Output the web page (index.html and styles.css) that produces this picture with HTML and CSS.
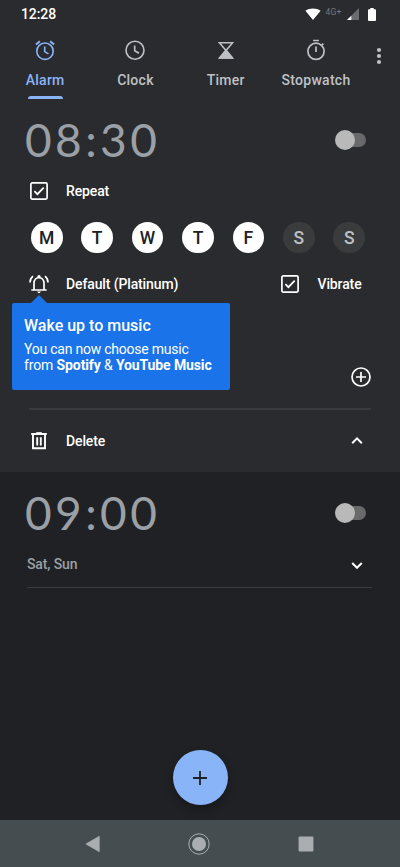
FILE: index.html
```html
<!DOCTYPE html>
<html lang="en">
<head>
<meta charset="utf-8">
<title>Clock</title>
<link rel="stylesheet" href="styles.css">
</head>
<body>
<div class="phone">
  <header class="status">
    <span class="status-time">12:28</span>
    <div class="status-icons">
      <svg width="16" height="12" viewBox="0 0 16 12"><path d="M8 12 .4 2.800C4.600-.4 11.400-.4 15.600 2.800z" fill="#fff"/></svg>
      <span class="net">4G+</span>
      <svg class="signal" width="12" height="12" viewBox="0 0 12 12"><path d="M12 0v12H0z" fill="#6b6c6e"/><path d="M4.300 7.700V12H0z" fill="#fff"/></svg>
      <svg class="battery" width="8" height="13" viewBox="0 0 8 13"><path d="M2.300 0h3.400v1.300H7q1 0 1 1V12q0 1-1 1H1q-1 0-1-1V2.300q0-1 1-1h1.300z" fill="#fff"/></svg>
    </div>
  </header>

  <nav class="tabs">
    <div class="tab active">
      <svg width="24" height="24" viewBox="0 0 24 24" fill="none" stroke="currentColor" stroke-width="1.600"><circle cx="12" cy="13.200" r="8.200"/><path d="M11.700 8.500v5.100l3.800 2.300"/><path d="m2.900 6.500 4-3.300m14.200 3.300-4-3.300" stroke-width="2"/></svg>
      <span class="tab-label alarm">Alarm</span>
    </div>
    <div class="tab">
      <svg width="24" height="24" viewBox="0 0 24 24" fill="none" stroke="currentColor" stroke-width="1.600"><circle cx="12" cy="12.300" r="9"/><path d="M11.700 7.400v5.300l4.300 2.600"/></svg>
      <span class="tab-label clock">Clock</span>
    </div>
    <div class="tab">
      <svg width="24" height="24" viewBox="0 0 24 24"><path d="M5.400 4.700h13.200L12 12.500zM5.400 20h13.200L12 12z" fill="none" stroke="currentColor" stroke-width="1.500"/><path d="M4.600 20.700h14.800L12 12z" fill="currentColor"/></svg>
      <span class="tab-label timer">Timer</span>
    </div>
    <div class="tab">
      <svg width="24" height="24" viewBox="0 0 24 24" fill="none" stroke="currentColor" stroke-width="1.700"><circle cx="12" cy="13.300" r="8.100"/><path d="M9.100 2.500h5.800M12 8.500v5.600M17.600 7.500l1.800-1.800"/></svg>
      <span class="tab-label stopwatch">Stopwatch</span>
    </div>
    <svg class="more" width="6" height="18" viewBox="0 0 6 18" fill="#bfc1c5"><circle cx="3" cy="3" r="2.100"/><circle cx="3" cy="9" r="2.100"/><circle cx="3" cy="15" r="2.100"/></svg>
  </nav>

  <main>
    <section class="card open">
      <div class="row time-row"><span class="time">08:30</span><span class="switch"></span></div>
      <div class="row repeat-row">
        <svg class="icon" width="20" height="20" viewBox="0 0 20 20" fill="none" stroke="#fff" stroke-width="1.700"><rect x="1.900" y="1.900" width="16.200" height="16.200" rx="1.300"/><path d="m5.400 10.200 3 3 6.300-6.600"/></svg>
        <span class="label">Repeat</span>
      </div>
      <div class="days">
        <span class="day on">M</span><span class="day on">T</span><span class="day on">W</span><span class="day on">T</span><span class="day on">F</span><span class="day">S</span><span class="day">S</span>
      </div>
      <div class="row sound-row">
        <svg class="icon" width="20" height="20" viewBox="0 0 20 20" fill="none" stroke="#fff" stroke-width="1.700"><path d="M2.300 16h15.400M5 16V9.300C5 1.700 15 1.700 15 9.300V16M1 8.600C1 5.800 2 3.800 4 2.200M19 8.600C19 5.800 18 3.800 16 2.200"/><path d="M8.500 3V1.700q1.500-1.500 3 0V3zM8.100 17.500h3.800q-1.900 3.400-3.800 0z" fill="#fff" stroke="none"/></svg>
        <span class="label default">Default (Platinum)</span>
        <svg class="vib-box" width="20" height="20" viewBox="0 0 20 20" fill="none" stroke="#fff" stroke-width="1.700"><rect x="1.900" y="1.900" width="16.200" height="16.200" rx="1.300"/><path d="m5.400 10.200 3 3 6.300-6.600"/></svg>
        <span class="label vibrate">Vibrate</span>
        <aside class="tip">
          <h2>Wake up to music</h2>
          <p class="line-one">You can now choose music</p>
          <p class="line-two">from <b>Spotify</b> &amp; <b>YouTube Music</b></p>
        </aside>
      </div>
      <div class="row add-row">
        <svg width="20" height="20" viewBox="0 0 20 20" fill="none" stroke="#fff" stroke-width="1.700"><circle cx="10" cy="10" r="9"/><path d="M10 5v10M5 10h10"/></svg>
      </div>
      <div class="rule"></div>
      <div class="row delete-row">
        <svg class="icon" width="20" height="20" viewBox="0 0 20 20" fill="none" stroke="#fff" stroke-width="1.900"><path d="M2.200 3h15.600M4 3v14.200h12V3M8.200 6.200v8.300M11.800 6.200v8.300"/><path d="M7.200 1.900h5.600" stroke-width="1.500"/></svg>
        <span class="label">Delete</span>
        <svg class="chev" width="12" height="8" viewBox="0 0 12 8" fill="none" stroke="#fff" stroke-width="2"><path d="m1.200 6.200 4.800-4.800 4.800 4.800"/></svg>
      </div>
    </section>

    <section class="card">
      <div class="row time-row second"><span class="time">09:00</span><span class="switch"></span></div>
      <div class="row summary-row">
        <span class="label muted">Sat, Sun</span>
        <svg class="chev" width="12" height="9" viewBox="0 0 12 9" fill="none" stroke="#fff" stroke-width="2"><path d="m1.200 3 4.800 4.800 4.800-4.800"/></svg>
      </div>
      <div class="rule thin"></div>
    </section>
  </main>

  <div class="fab-area">
    <div class="fab"><svg width="14" height="14" viewBox="0 0 14 14" stroke="#202124" stroke-width="1.800"><path d="M7 0v14M0 7h14"/></svg></div>
  </div>

  <footer class="navbar">
    <svg width="16" height="16" viewBox="0 0 16 16"><path d="M14.300.2V15.800L.8 8z" fill="#aaaeb1" stroke="#aaaeb1" stroke-width=".6" stroke-linejoin="round"/></svg>
    <svg width="22" height="22" viewBox="0 0 22 22"><circle cx="11" cy="11" r="10.200" fill="none" stroke="#aaaeb1" stroke-width="1"/><circle cx="11" cy="11" r="7" fill="#aaaeb1"/></svg>
    <svg width="16" height="16" viewBox="0 0 16 16"><rect x=".6" y=".6" width="14.800" height="14.800" rx="1" fill="#aaaeb1"/></svg>
  </footer>
</div>
</body>
</html>
```
FILE: styles.css
```css
* { box-sizing: border-box; }
body { margin: 0; background: #202124; font-family: Roboto, sans-serif; color: #fff; }
svg { display: block; flex: none; }
.phone { display: flex; flex-direction: column; width: 400px; height: 867px; overflow: hidden; background: #202124; }

.status { display: flex; justify-content: space-between; align-items: center; height: 28px; padding: 0 24.500px 0 21px; background: #2a2b2e; }
.status-time { font-size: 14px; font-weight: 500; line-height: 28px; letter-spacing: -.1px; }
.status-icons { display: flex; align-items: center; }
.net { margin: -5px 4px 0 5px; width: 17px; font-size: 8.500px; letter-spacing: .2px; color: #77787a; }
.battery { margin-left: 9px; }

.tabs { display: flex; height: 80px; background: #2a2b2e; color: #bdc1c6; }
.tab { display: flex; flex-direction: column; align-items: center; width: 90.300px; padding-top: 10px; }
.tab-label { position: relative; margin-top: 9px; font: 500 14px/18px Roboto, sans-serif; letter-spacing: .27px; white-space: nowrap; }
.active { color: #8ab4f8; }
.active .tab-label::after { content: ""; position: absolute; left: 2px; right: 2px; top: 25px; height: 3px; border-radius: 3px 3px 0 0; background: #8ab4f8; }
.more { margin: 19px 0 0 14.400px; }

.card.open { height: 364px; background: #2a2b2e; }
.row { display: flex; align-items: center; }
.time-row { height: 63px; padding: 0 34.500px 0 25px; justify-content: space-between; }
.time { font: 400 46px/62px Lato, sans-serif; letter-spacing: 3.400px; color: #9aa0a6; white-space: nowrap; }
.switch { position: relative; width: 31px; height: 20px; display: flex; align-items: center; }
.switch::before { content: ""; margin-left: 4px; width: 27px; height: 14px; border-radius: 7px; background: #69696b; }
.switch::after { content: ""; position: absolute; left: 0; top: 0; width: 20px; height: 20px; border-radius: 50%; background: #b9b9b9; }
.icon { margin-right: 17px; }
.label { font-size: 14px; font-weight: 500; line-height: 20px; letter-spacing: -.12px; white-space: nowrap; }
.repeat-row { height: 40px; padding-left: 29px; }
.days { display: flex; justify-content: space-between; align-items: center; height: 53px; padding: 0 35px 0 31px; }
.day { width: 31.500px; height: 31.500px; border-radius: 50%; background: #3a3b3d; color: #bdc1c6; font-size: 17.500px; font-weight: 500; line-height: 32px; text-align: center; }
.day.on { background: #fff; color: #202124; }
.sound-row { position: relative; height: 41px; padding: 0 0 1px 29px; }
.default { width: 214px; }
.vib-box { margin-right: 17.500px; }
.tip { position: absolute; left: 12px; top: 39px; width: 218px; height: 86.500px; padding: 12.500px 12px 12px; border-radius: 2px; background: #1a73e8; }
.tip::before { content: ""; position: absolute; left: 19px; top: -8px; border: solid transparent; border-width: 0 8px 8px; border-bottom-color: #1a73e8; }
.tip h2 { margin: 0 0 5.500px; font: 500 16px/20px Roboto, sans-serif; letter-spacing: 0; white-space: nowrap; }
.tip p { margin: 0; font-size: 14px; line-height: 16px; letter-spacing: -.23px; white-space: nowrap; }
.tip .line-two { letter-spacing: -.12px; }
.add-row { height: 103px; padding: 41px 29px 0 0; justify-content: flex-end; }
.rule { height: 2px; margin: 0 29px; background: #393a3d; }
.delete-row { height: 62px; padding: 0 37px 0 29px; }
.chev { margin-left: auto; }
.second { height: 81px; }
.second .time { line-height: 80px; }
.summary-row { height: 34px; padding: 0 37px 12px 27px; }
.muted { color: #9aa0a6; }
.rule.thin { height: 1px; margin: 0 28px 0 27px; background: #3a3b3e; }

.fab-area { margin-top: auto; height: 70px; display: flex; justify-content: center; }
.fab { display: flex; align-items: center; justify-content: center; width: 55px; height: 55px; border-radius: 50%; background: #8ab4f8; box-shadow: 0 5px 10px rgba(0,0,0,.28); }
.navbar { display: flex; justify-content: space-between; align-items: center; height: 47px; padding: 0 86px 0 84.500px; background: #454d51; }
```
